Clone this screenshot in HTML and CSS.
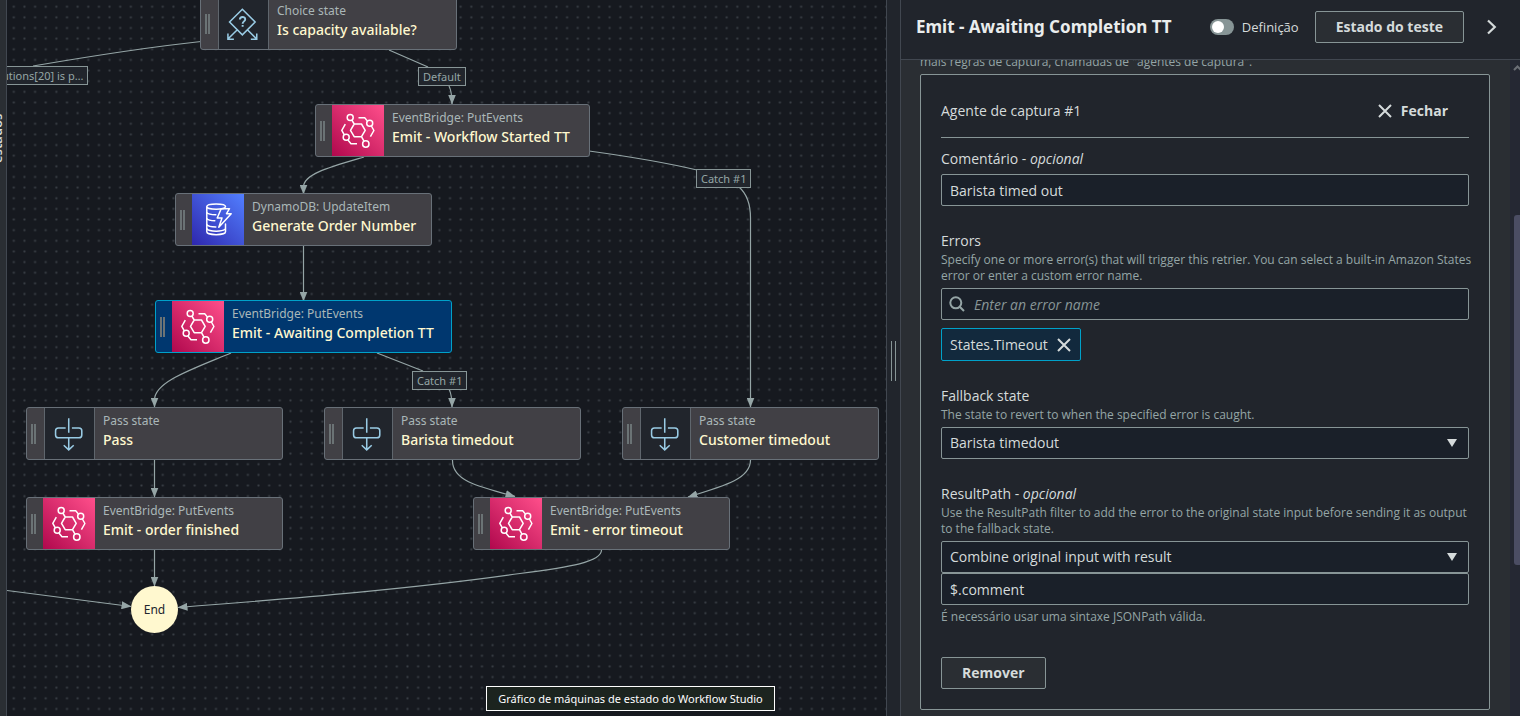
FILE: index.html
```html
<!DOCTYPE html>
<html lang="pt">
<head>
<meta charset="utf-8">
<title>Workflow Studio</title>
<link rel="stylesheet" href="styles.css">
</head>
<body>
<svg class="sprite" aria-hidden="true">
  <symbol id="i-event" viewBox="0 0 51 51">
    <g fill="none" stroke="#fff" stroke-width="1.5" stroke-linejoin="round">
      <circle cx="17.7" cy="12.5" r="3"/><circle cx="37.2" cy="18.3" r="3"/>
      <circle cx="13.7" cy="32.3" r="3"/><circle cx="33.3" cy="39" r="3.2"/>
      <path d="M18 25.3 21.7 19H29l3.7 6.3-3.7 6.4h-7.3zM19.3 15l2.4 4M29 31.7l2.6 4.6M26 12.7h6.2l2.6 3.2M38.9 21l2.5 4.5-3.5 6.2M12.8 19.2l-3.5 6.1 2.5 4.5M15.4 35l3.1 3.8h6"/>
    </g>
  </symbol>
  <symbol id="i-dynamo" viewBox="0 0 51 51">
    <g fill="none" stroke="#fff" stroke-width="1.5" stroke-linejoin="round" stroke-linecap="round">
      <path d="M33 12.5c0-1.6-4.200-2.600-9.300-2.600S14.300 10.900 14.300 12.500s4.200 2.800 9.400 2.800 9.300-1.200 9.300-2.800M14.300 12.500v25.200c0 1.700 4.200 3 9.400 3s9.300-1.300 9.300-3V30"/>
      <path d="M14.300 18.600c1 1.300 4 2 9 2.100M14.300 24.600c1 1.300 3.800 2 8 2.100M14.300 30.600c1 1.400 4.500 2.300 9 2.300M14.300 34.800c1 1.400 4.500 2.400 9.400 2.400 4 0 7.400-.7 8.800-1.900"/>
      <path d="M28.700 14.700H37l-3 5h4.700L26.300 33.300 29.500 24h-4.800z"/>
    </g>
  </symbol>
  <symbol id="i-pass" viewBox="0 0 51 51">
    <g fill="none" stroke="#99cbe4" stroke-width="1.600">
      <path d="M24.700 9.700v15M21.500 19.700H14a3 3 0 0 0-3 3V27a3 3 0 0 0 3 3h21.300a3 3 0 0 0 3-3v-4.300a3 3 0 0 0-3-3H28M24.700 30v12.300M19.500 37.700l5.200 4.900 5.200-4.900"/>
    </g>
  </symbol>
  <symbol id="i-choice" viewBox="0 0 51 51">
    <g fill="none" stroke="#99cbe4" stroke-width="1.600">
      <path d="M24.300 10.700 37.600 24 24.300 37.300 11 24zM18.800 32.300 9.300 41.700M9.300 35.800v6h6.200M29.800 32.300l9.500 9.400M39.300 35.800v6h-6.200"/>
      <path stroke-width="2" d="M21.700 21.400c.1-3.600 5.600-3.500 5.600-.3 0 2.200-2.700 2.200-2.700 4.600M24.600 27v2"/>
    </g>
  </symbol>
  <symbol id="i-x" viewBox="0 0 16 16">
    <path d="M2 2l12 12M14 2 2 14" fill="none" stroke="#d5dbdb" stroke-width="2"/>
  </symbol>
</svg>

<div class="app">
  <aside class="rail"><span class="rail-label">estados</span></aside>

  <main class="canvas">
    <svg class="edges" aria-hidden="true">
      <defs>
        <pattern id="dots" x="1.500" y="1.400" width="10.640" height="10.640" patternUnits="userSpaceOnUse">
          <rect x="4.300" y="4.300" width="2" height="2" rx=".4" fill="#3a3f46"/>
        </pattern>
        <marker id="arrow" markerUnits="userSpaceOnUse" markerWidth="10" markerHeight="8" refX="9.500" refY="4" orient="auto">
          <path d="M0 0 10 4 0 8z" fill="#95a5a6"/>
        </marker>
      </defs>
      <rect width="100%" height="100%" fill="url(#dots)"/>
      <g class="wires" transform="translate(-7 0)">
        <path d="M201 41.500C150 47 80 58 33 66"/>
        <path d="M389 50 428 67"/>
        <path class="to" d="M449 86C451 90 452 93 452 104"/>
        <path class="to" d="M364 157C330 167 303.500 174 303.500 187V194"/>
        <path d="M589 151C640 158 680 166 697 170"/>
        <path class="to" d="M739 187C747 194 750.500 203 750.500 218V407"/>
        <path class="to" d="M303.500 246V301"/>
        <path class="to" d="M231 353C190 370 154.500 382 154.500 400V407"/>
        <path d="M377 353 423 371"/>
        <path class="to" d="M449 389C451 393 452 396 452 407"/>
        <path class="to" d="M154.500 460V497"/>
        <path class="to" d="M154.500 550V586"/>
        <path class="to" d="M7 590.500 131 606.500"/>
        <path class="to" d="M601.500 550C601.500 562 570 567 520 573.500C420 588 300 598 178 607.500"/>
        <path class="to" d="M452.500 460C452 480 475 486 515 496.500"/>
        <path class="to" d="M750.500 460C750.500 478 728 485 688 497"/>
      </g>
    </svg>

    <span class="tag tag-path">utions[20] is p…</span>
    <span class="tag tag-default">Default</span>
    <span class="tag tag-catch-top">Catch #1</span>
    <span class="tag tag-catch-low">Catch #1</span>

    <div class="node n-choice"><i class="grip"></i><svg class="ico flow"><use href="#i-choice"/></svg><div class="txt"><small>Choice state</small><b>Is capacity available?</b></div></div>
    <div class="node n-started"><i class="grip"></i><svg class="ico pink"><use href="#i-event"/></svg><div class="txt"><small>EventBridge: PutEvents</small><b>Emit - Workflow Started TT</b></div></div>
    <div class="node n-order"><i class="grip"></i><svg class="ico blue"><use href="#i-dynamo"/></svg><div class="txt"><small>DynamoDB: UpdateItem</small><b>Generate Order Number</b></div></div>
    <div class="node n-await selected"><i class="grip"></i><svg class="ico pink"><use href="#i-event"/></svg><div class="txt"><small>EventBridge: PutEvents</small><b>Emit - Awaiting Completion TT</b></div></div>
    <div class="node n-pass"><i class="grip"></i><svg class="ico flow"><use href="#i-pass"/></svg><div class="txt"><small>Pass state</small><b>Pass</b></div></div>
    <div class="node n-barista"><i class="grip"></i><svg class="ico flow"><use href="#i-pass"/></svg><div class="txt"><small>Pass state</small><b>Barista timedout</b></div></div>
    <div class="node n-customer"><i class="grip"></i><svg class="ico flow"><use href="#i-pass"/></svg><div class="txt"><small>Pass state</small><b>Customer timedout</b></div></div>
    <div class="node n-finished"><i class="grip"></i><svg class="ico pink"><use href="#i-event"/></svg><div class="txt"><small>EventBridge: PutEvents</small><b>Emit - order finished</b></div></div>
    <div class="node n-error"><i class="grip"></i><svg class="ico pink"><use href="#i-event"/></svg><div class="txt"><small>EventBridge: PutEvents</small><b>Emit - error timeout</b></div></div>
    <div class="end">End</div>
    <div class="tip" role="tooltip">Gráfico de máquinas de estado do Workflow Studio</div>
  </main>

  <div class="splitter"><i class="splitter-grip"></i></div>

  <section class="panel">
    <header class="panel-head">
      <h1>Emit - Awaiting Completion TT</h1>
      <label class="toggle"><input type="checkbox" role="switch">Definição</label>
      <button class="btn" type="button">Estado do teste</button>
      <button class="icon-btn" type="button" aria-label="Recolher"><svg width="16" height="18" viewBox="0 0 16 18"><path d="M4 2.500 10.800 9 4 15.500" fill="none" stroke="#d5dbdb" stroke-width="2.200"/></svg></button>
    </header>
    <div class="panel-body">
      <div class="scroll">
        <p class="desc intro">mais regras de captura, chamadas de "agentes de captura".</p>
        <form class="card">
          <div class="card-head">
            <span>Agente de captura #1</span>
            <button class="link-btn" type="button"><svg width="16" height="16"><use href="#i-x"/></svg>Fechar</button>
          </div>
          <div class="field">
            <label for="comment">Comentário - <em>opcional</em></label>
            <input id="comment" type="text" value="Barista timed out">
          </div>
          <div class="field">
            <label for="errors">Errors</label>
            <p class="desc">Specify one or more error(s) that will trigger this retrier. You can select a built-in Amazon States error or enter a custom error name.</p>
            <div class="search">
              <svg width="16" height="16" viewBox="0 0 16 16" aria-hidden="true"><g fill="none" stroke="#95a5a6" stroke-width="2"><circle cx="6.800" cy="6.800" r="5.500"/><path d="m10.700 10.700 4.300 4.300"/></g></svg>
              <input id="errors" type="text" placeholder="Enter an error name">
            </div>
            <div class="token">States.Timeout<button type="button" aria-label="Remover States.Timeout"><svg width="16" height="16"><use href="#i-x"/></svg></button></div>
          </div>
          <div class="field">
            <label for="fallback">Fallback state</label>
            <p class="desc">The state to revert to when the specified error is caught.</p>
            <div class="select"><select id="fallback"><option>Barista timedout</option></select></div>
          </div>
          <div class="field">
            <label for="result">ResultPath - <em>opcional</em></label>
            <p class="desc">Use the ResultPath filter to add the error to the original state input before sending it as output to the fallback state.</p>
            <div class="select"><select id="result"><option>Combine original input with result</option></select></div>
            <input type="text" value="$.comment" aria-label="JSONPath">
            <p class="desc hint">É necessário usar uma sintaxe JSONPath válida.</p>
          </div>
          <button class="btn remove" type="button">Remover</button>
        </form>
      </div>
      <div class="scrollbar"><svg width="10" height="8" viewBox="0 0 10 8"><path d="M4 6 7.500 2.500 11 6" fill="none" stroke="#6b6e75" stroke-width="2"/></svg><i class="thumb"></i></div>
    </div>
  </section>
</div>
</body>
</html>
```
FILE: styles.css
```css
* { box-sizing: border-box; }

body {
  margin: 0;
  background: #16191f;
  color: #d5dbdb;
  font: 13px/22px "Noto Sans", "Open Sans", sans-serif;
}

h1, p { margin: 0; }

button, input, select {
  font: inherit;
  color: inherit;
}

button { cursor: pointer; }

.sprite {
  position: absolute;
  width: 0;
  height: 0;
}

.app {
  display: grid;
  grid-template-columns: 7px minmax(0, 1fr) 14px 620px;
  height: 100vh;
  overflow: hidden;
}

/* Left rail */
.rail {
  display: flex;
  justify-content: flex-end;
  padding: 115px 2px 0 0;
  overflow: hidden;
  background: #2a2e33;
  border-right: 1px solid #414750;
}

.rail-label {
  height: 48px;
  writing-mode: vertical-rl;
  transform: rotate(180deg);
  font-weight: 600;
  line-height: 14px;
}

/* Canvas */
.canvas {
  position: relative;
  overflow: hidden;
}

.edges {
  position: absolute;
  inset: 0;
  width: 100%;
  height: 100%;
}

.wires path {
  fill: none;
  stroke: #95a5a6;
  stroke-width: 1.2;
}

.wires .to { marker-end: url(#arrow); }

.tag {
  position: absolute;
  height: 19px;
  padding: 0 4px;
  border: 1px solid #879596;
  background: #21252c;
  color: #95a5a6;
  font-size: 11px;
  line-height: 17px;
  white-space: nowrap;
}

.tag-path { left: -10px; top: 66px; }
.tag-default { left: 411px; top: 67px; }
.tag-catch-top { left: 689px; top: 169px; }
.tag-catch-low { left: 405px; top: 371px; }

.node {
  position: absolute;
  display: flex;
  width: 257px;
  height: 53px;
  overflow: hidden;
  border: 1px solid #687078;
  border-radius: 3px;
  background: #414045;
}

.n-choice { left: 193px; top: -3px; }
.n-started { left: 308px; top: 104px; width: 275px; }
.n-order { left: 168px; top: 193px; }
.n-await { left: 148px; top: 300px; width: 297px; }
.n-pass { left: 19px; top: 407px; }
.n-barista { left: 317px; top: 407px; }
.n-customer { left: 615px; top: 407px; }
.n-finished { left: 19px; top: 497px; }
.n-error { left: 466px; top: 497px; }

.selected {
  border-color: #00a1c9;
  background: #00376f;
}

.grip {
  flex: none;
  width: 5px;
  height: 20px;
  margin: 16px 7px 0 4px;
  border: solid #6b7375;
  border-width: 0 2px;
}

.ico {
  flex: none;
  width: 52px;
  height: 51px;
}

.pink { background: linear-gradient(45deg, #b0084d, #ff4f8b); }
.blue { background: linear-gradient(45deg, #2e27ad, #527fff); }

.flow {
  width: 51px;
  margin-left: 1px;
  border: solid #5f666d;
  border-width: 0 1px;
  background: #21252c;
}

.txt {
  display: flex;
  flex-direction: column;
  padding: 3px 0 0 8px;
  white-space: nowrap;
}

.txt small {
  color: #aab7b8;
  font-size: 12px;
  line-height: 19px;
}

.txt b {
  color: #fff8cf;
  font-size: 14px;
  font-weight: 500;
  line-height: 19px;
}

.end {
  position: absolute;
  left: 124px;
  top: 586px;
  width: 47px;
  height: 47px;
  border-radius: 50%;
  background: #fff8cf;
  color: #21252c;
  font-size: 12px;
  line-height: 47px;
  text-align: center;
}

.tip {
  position: absolute;
  left: 479px;
  top: 686px;
  width: 289px;
  height: 25px;
  border: 1px solid #fff;
  background: #1c241f;
  color: #fff;
  font: 11px/23px "Noto Sans", sans-serif;
  text-align: center;
  white-space: nowrap;
}

/* Splitter */
.splitter {
  display: flex;
  align-items: center;
  padding: 6px 0 0 4px;
  border-left: 1px solid #414750;
  background: #21252c;
}

.splitter-grip {
  width: 5px;
  height: 40px;
  border: solid #879596;
  border-width: 0 1px;
}

/* Panel */
.panel {
  display: flex;
  flex-direction: column;
  min-height: 0;
  border-left: 1px solid #414750;
  background: #2a2e33;
  font-family: "Open Sans", "Noto Sans", sans-serif;
  font-size: 14px;
}

.panel-head {
  display: flex;
  align-items: center;
  height: 60px;
  flex: none;
  padding: 0 20px 6px 15px;
  border-bottom: 1px solid #414750;
  background: #21252c;
}

.panel-head h1 {
  margin-right: auto;
  font-family: "Noto Sans", sans-serif;
  font-size: 17px;
  font-weight: 700;
  color: #eaeded;
}

.toggle {
  display: flex;
  align-items: center;
  gap: 8px;
  margin-right: 16px;
  font-size: 13px;
}

.toggle input {
  appearance: none;
  width: 24px;
  height: 16px;
  margin: 0;
  padding: 2px;
  border-radius: 8px;
  background: #879596;
}

.toggle input::before {
  content: "";
  display: block;
  width: 12px;
  height: 12px;
  border-radius: 50%;
  background: #fff;
}

.btn {
  height: 32px;
  padding: 0 20px;
  border: 1px solid #879596;
  border-radius: 2px;
  background: #2a2e33;
  font-weight: 700;
}

.icon-btn {
  display: flex;
  margin-left: 20px;
  padding: 0;
  border: 0;
  background: none;
}

.panel-body {
  display: flex;
  flex: 1;
  min-height: 0;
}

.scroll {
  flex: 1;
  padding: 0 20px 0 19px;
  overflow: hidden;
}

.scrollbar {
  width: 10px;
  padding-top: 4px;
  background: #252833;
}

.scrollbar svg { display: block; }

.thumb {
  display: block;
  height: 350px;
  margin: 143px 0 0 4px;
  border-radius: 3px 0 0 3px;
  background: #4b4d63;
}

.desc {
  color: #95a5a6;
  font-size: 12px;
  line-height: 16px;
}

.intro { margin: -6px 0 4px; }

.card {
  padding: 20px;
  border: 1px solid #879596;
  border-radius: 2px;
  background: #21252c;
}

.card-head {
  display: flex;
  align-items: center;
  justify-content: space-between;
  height: 43px;
  margin-bottom: 10px;
  padding: 0 21px 10px 0;
  border-bottom: 1px solid #879596;
}

.link-btn {
  display: flex;
  align-items: center;
  gap: 8px;
  padding: 0;
  border: 0;
  background: none;
  font-weight: 700;
}

.field { margin-bottom: 24px; }
.field > label { display: block; }
.field > label + * { margin-top: 4px; }
.field > label + .desc { margin: 0 -12px 4px 0; }

.field input, .select select {
  display: block;
  width: 100%;
  height: 32px;
  padding: 0 8px;
  border: 1px solid #879596;
  border-radius: 2px;
  background: #1a2029;
}

.search { position: relative; }

.search svg {
  position: absolute;
  left: 8px;
  top: 8px;
}

.field .search input { padding-left: 32px; }

.search input::placeholder {
  color: #879596;
  font-style: italic;
  opacity: 1;
}

.token {
  display: inline-flex;
  align-items: center;
  gap: 8px;
  height: 33px;
  margin-top: 8px;
  padding: 0 8px;
  border: 1px solid #00a1c9;
  border-radius: 2px;
  background: #12293d;
  vertical-align: top;
}

.token button {
  display: flex;
  padding: 0;
  border: 0;
  background: none;
}

.select { position: relative; }
.select select { appearance: none; }

.select::after {
  content: "";
  position: absolute;
  right: 12px;
  top: 12px;
  border: solid transparent;
  border-width: 8px 5px 0;
  border-top-color: #d5dbdb;
}

.hint { margin-top: 4px; }
.remove { display: block; margin-top: 32px; }
```
